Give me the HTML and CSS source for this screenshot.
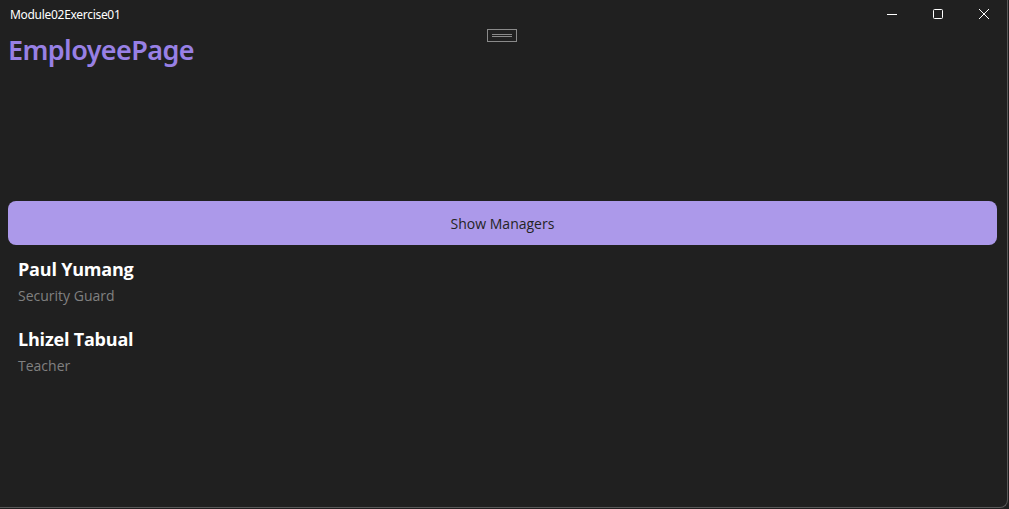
FILE: index.html
```html
<!DOCTYPE html>
<html>
<head>
<meta charset="utf-8">
<link rel="stylesheet" href="styles.css">
</head>
<body>
<div class="window">
  <div class="titlebar">
    <span class="app-title">Module02Exercise01</span>
    <div class="controls">
      <span class="ctl"><svg width="12" height="12" viewBox="0 0 12 12"><path d="M1 6.5H11" stroke="#fff" stroke-width="1"/></svg></span>
      <span class="ctl"><svg width="12" height="12" viewBox="0 0 12 12"><rect x="1.5" y="1.5" width="9" height="9" rx="1" fill="none" stroke="#fff" stroke-width="1"/></svg></span>
      <span class="ctl"><svg width="12" height="12" viewBox="0 0 12 12"><path d="M1 1L11 11M11 1L1 11" stroke="#fff" stroke-width="1"/></svg></span>
    </div>
  </div>
  <div class="handle"><svg width="31" height="14" viewBox="0 0 31 14"><rect x="0.5" y="0.5" width="29" height="12" fill="none" stroke="#8a8a8a"/><path d="M5 5.5H25M5 7.5H25" stroke="#8a8a8a"/></svg></div>
  <div class="content">
    <h1 class="page-title">EmployeePage</h1>
    <button class="btn">Show Managers</button>
    <ul class="list">
      <li class="item"><div class="name">Paul Yumang</div><div class="role">Security Guard</div></li>
      <li class="item"><div class="name">Lhizel Tabual</div><div class="role">Teacher</div></li>
    </ul>
  </div>
</div>
</body>
</html>
```
FILE: styles.css
```css
html, body { margin: 0; padding: 0; background: #202020; }
body { width: 1009px; height: 509px; overflow: hidden; font-family: "Open Sans", sans-serif; }
.window {
  position: relative;
  width: 1008px; height: 508px;
  box-sizing: border-box;
  border-right: 1px solid #5a5a5a;
  border-bottom: 1px solid #5a5a5a;
  border-bottom-right-radius: 8px;
  background: #202020;
}
.titlebar { height: 28px; display: flex; align-items: center; justify-content: space-between; }
.app-title { font-family: "Noto Sans", "Open Sans", sans-serif; font-size: 12px; color: #fff; padding-left: 10px; letter-spacing: -0.3px; }
.controls { display: flex; align-self: stretch; }
.ctl { width: 46px; display: flex; align-items: center; justify-content: center; }
.handle { position: absolute; left: 487px; top: 29px; line-height: 0; }
.content { padding: 0 10px 0 8px; }
.page-title {
  margin: 5px 0 0 0;
  font-family: "Noto Sans", sans-serif;
  font-weight: 600; font-size: 27px; line-height: 34px;
  color: #9880e5; letter-spacing: -0.6px;
}
.btn {
  display: block; width: 100%;
  margin-top: 134px; height: 44px;
  border: none; border-radius: 8px;
  background: #ac99ea; color: #242424;
  font-family: "Open Sans", sans-serif; font-size: 14px;
}
.list { list-style: none; margin: 0; padding: 0 10px; }
.item { height: 70px; box-sizing: border-box; padding-top: 12px; }
.name { font-size: 18px; font-weight: 700; color: #fff; line-height: 24px; letter-spacing: -0.2px; }
.role { font-size: 14px; color: #808080; line-height: 20px; margin-top: 5px; }
```
